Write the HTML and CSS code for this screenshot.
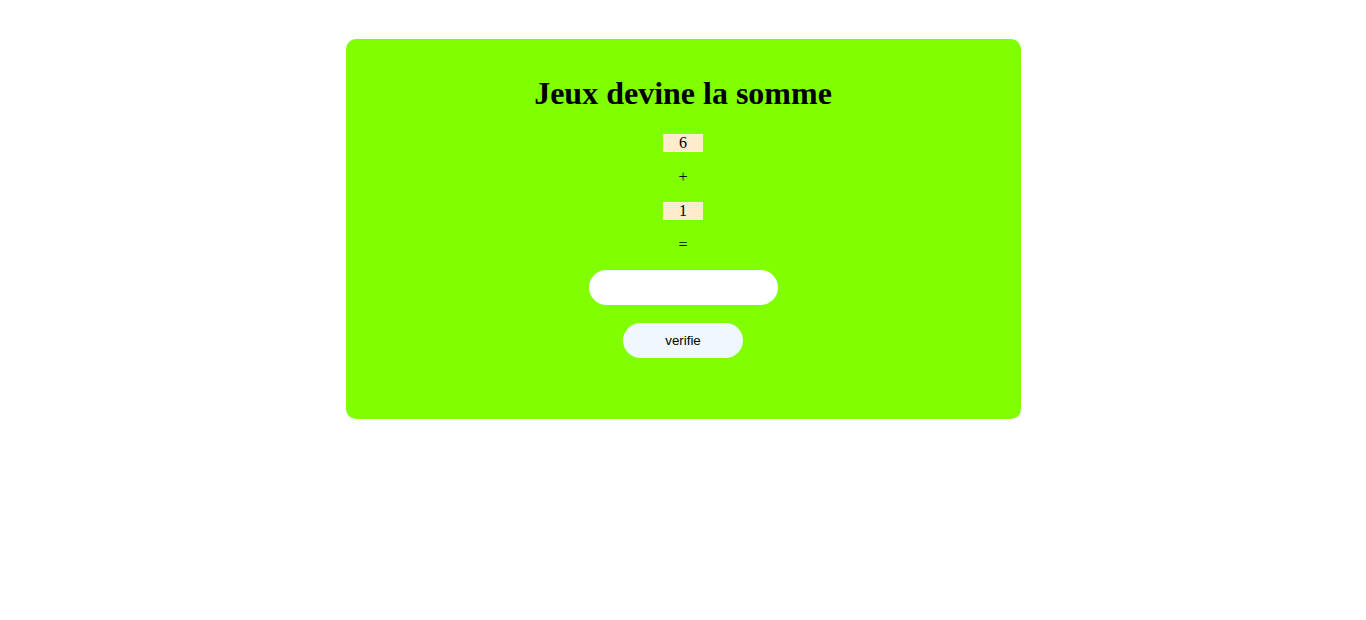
FILE: index.html
```html
<!DOCTYPE html>
<html lang="fr">
<head>
<meta charset="utf-8">
<title>Jeux devine la somme</title>
<link rel="stylesheet" href="styles.css">
</head>
<body>
<main class="card">
  <h1 class="title">Jeux devine la somme</h1>
  <div class="num">6</div>
  <div class="op">+</div>
  <div class="num">1</div>
  <div class="op">=</div>
  <input class="answer" type="text" aria-label="réponse">
  <button class="check" type="button">verifie</button>
</main>
</body>
</html>
```
FILE: styles.css
```css
html, body {
  margin: 0;
  padding: 0;
  background: #ffffff;
}
body {
  font-family: "Liberation Serif", "Times New Roman", serif;
  font-size: 16px;
  color: #000;
}
.card {
  width: 675px;
  margin: 39px auto 0;
  box-sizing: border-box;
  padding: 36px 0 61px;
  background: #7fff00;
  border-radius: 10px;
  display: flex;
  flex-direction: column;
  align-items: center;
  gap: 16px;
}
.title {
  margin: 0 0 6px;
  font-size: 32px;
  line-height: 37px;
  font-weight: bold;
}
.num {
  width: 40px;
  height: 18px;
  line-height: 18px;
  text-align: center;
  background: #ffebcd;
}
.op {
  height: 18px;
  line-height: 18px;
}
.answer {
  width: 189px;
  height: 35px;
  box-sizing: border-box;
  border: none;
  border-radius: 18px;
  background: #fff;
  padding: 0 12px;
  outline: none;
}
.check {
  margin-top: 2px;
  width: 120px;
  height: 35px;
  border: none;
  border-radius: 18px;
  background: #f0f8ff;
  font-family: "Liberation Sans", Arial, sans-serif;
  font-size: 13.33px;
  color: #000;
  cursor: pointer;
}
```
